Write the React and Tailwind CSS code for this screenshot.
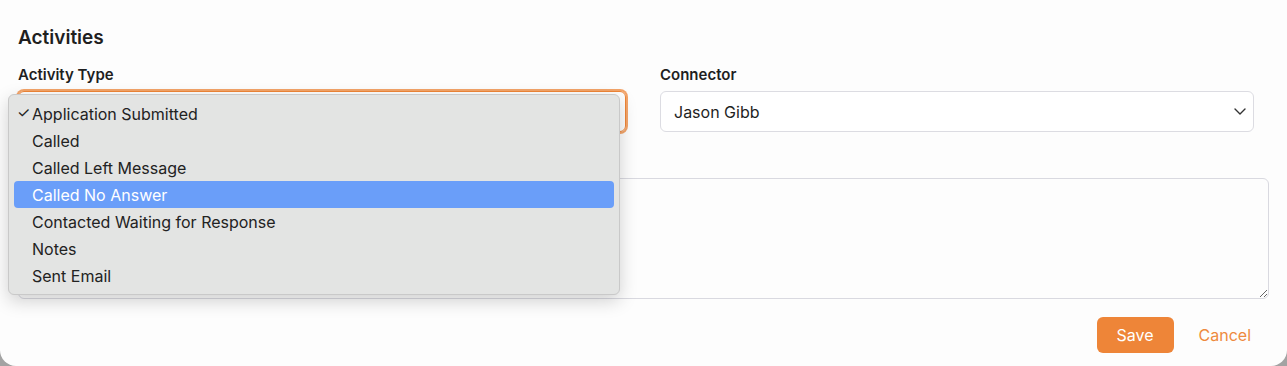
const options = [
  'Application Submitted',
  'Called',
  'Called Left Message',
  'Called No Answer',
  'Contacted Waiting for Response',
  'Notes',
  'Sent Email',
];

export default function App() {
  return (
    <div className="h-[366px] w-full bg-[#a3a3a3] font-['Inter',sans-serif] text-[#1f1f1f]">
      <div className="relative h-[366px] rounded-b-2xl bg-[#fdfdfd] px-[18px] pt-6">
        <h2 className="text-[19px] leading-7 font-semibold">Activities</h2>

        <div className="mt-[13px] grid grid-cols-[608px_594px] gap-x-[34px]">
          <div>
            <label className="mb-1.5 block text-[15px] leading-5 font-semibold">Activity Type</label>
            <div className="h-[41px] rounded-md border border-[#ee8537] ring-2 ring-[#f3a469]" />
          </div>
          <div>
            <label className="mb-1.5 block text-[15px] leading-5 font-semibold">Connector</label>
            <div className="flex h-[41px] items-center justify-between rounded-md border border-[#dcdce2] bg-white pr-[7px] pl-[13px]">
              <span className="text-base">Jason Gibb</span>
              <svg width="12" height="7" viewBox="0 0 12 7" fill="none" stroke="#333" strokeWidth="1.4" strokeLinecap="round" strokeLinejoin="round">
                <path d="M1 1l5 5 5-5" />
              </svg>
            </div>
          </div>
        </div>

        {/* notes field, its label sits under the open dropdown */}
        <div className="mt-[46px]">
          <textarea className="block h-[121px] w-full rounded-md border border-[#d9d9e0] bg-[#fdfdfd]" />
        </div>

        <div className="mt-[18px] flex justify-end gap-[7px]">
          <button className="h-9 w-[77px] rounded-md bg-[#ee8538] text-base text-white">Save</button>
          <button className="h-9 px-[18px] text-base text-[#ee8a3e]">Cancel</button>
        </div>

        <div className="absolute top-[94px] left-2 w-[612px] rounded-md border border-[#c9c9c9] bg-[#e3e4e3] px-[5px] py-[5px] shadow-[0_6px_18px_rgba(0,0,0,0.18)]">
          {options.map((o, i) => (
            <div
              key={o}
              className={
                'relative flex h-[27px] items-center rounded-[4px] pl-[18px] text-base ' +
                (i === 3 ? 'bg-[#6a9ef9] text-white' : 'text-[#222]')
              }
            >
              {i === 0 && <span className="absolute left-[3px] text-[15px]">✓</span>}
              {o}
            </div>
          ))}
        </div>
      </div>
    </div>
  );
}
